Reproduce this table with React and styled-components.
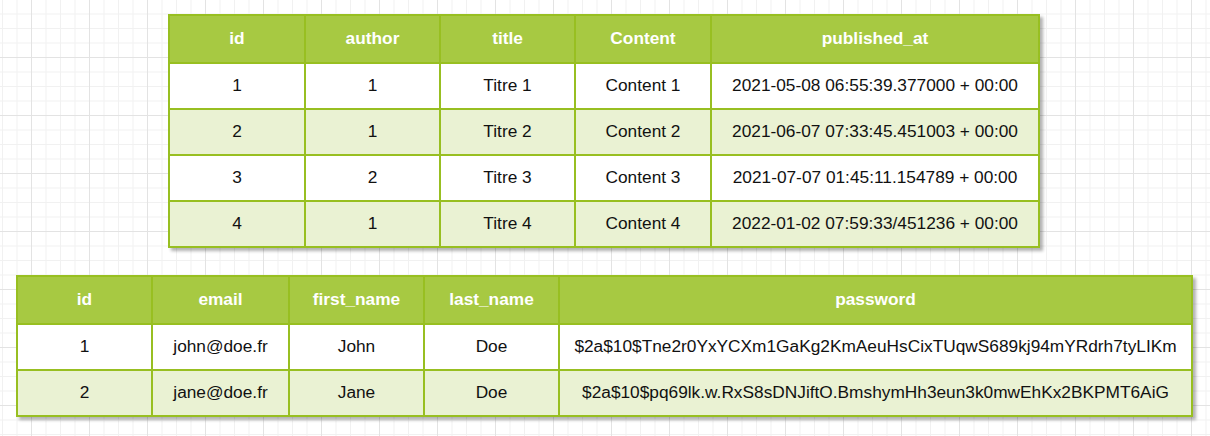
import styled, { createGlobalStyle } from "styled-components";

const GlobalStyle = createGlobalStyle`
html, body {
  margin: 0;
  padding: 0;
  height: 100%;
}
body {
  font-family: "Liberation Sans", Arial, sans-serif;
  background-color: #ffffff;
  background-image:
    linear-gradient(to right, #e3e3e3 1px, transparent 1px),
    linear-gradient(to bottom, #e3e3e3 1px, transparent 1px),
    linear-gradient(to right, #f1f1f1 1px, transparent 1px),
    linear-gradient(to bottom, #f1f1f1 1px, transparent 1px);
  background-size: 58px 58px, 58px 58px, 14.5px 14.5px, 14.5px 14.5px;
  background-position: 31px 0, 0 57px, 2px 0, 0 13.5px;
}
`;

const Canvas = styled.div`
display: flex;
flex-direction: column;
align-items: flex-start;
gap: 27px;
padding: 14px 0 0 0;
min-height: 436px;
box-sizing: border-box;
`;

const Table = styled.table`
border-collapse: collapse;
table-layout: fixed;
width: ${p => p.$width}px;
margin-left: ${p => p.$left}px;
box-shadow: 3px 3px 3px rgba(0, 0, 0, 0.3);
font-size: 17.3px;
`;

const Th = styled.th`
background: #a7c942;
color: #ffffff;
font-weight: bold;
height: 45.8px;
padding: 0;
border: 2px solid #98bf21;
text-align: center;
`;

const Row = styled.tr`
background: ${p => (p.$alt ? "#eaf2d3" : "#ffffff")};
`;

const Td = styled.td`
color: #111;
height: 44px;
padding: 0;
border: 2px solid #98bf21;
text-align: center;
white-space: nowrap;
`;

function DataTable({ columns, widths, rows, left }) {
  const total = widths.reduce((a, b) => a + b, 0);
  return (
    <Table $width={total} $left={left}>
      <colgroup>
        {widths.map((w, i) => <col key={i} style={{ width: w }} />)}
      </colgroup>
      <thead>
        <tr>
          {columns.map(c => <Th key={c}>{c}</Th>)}
        </tr>
      </thead>
      <tbody>
        {rows.map((r, i) => (
          <Row key={i} $alt={i % 2 === 1}>
            {r.map((v, j) => <Td key={j}>{v}</Td>)}
          </Row>
        ))}
      </tbody>
    </Table>
  );
}

const posts = [
  ["1", "1", "Titre 1", "Content 1", "2021-05-08 06:55:39.377000 + 00:00"],
  ["2", "1", "Titre 2", "Content 2", "2021-06-07 07:33:45.451003 + 00:00"],
  ["3", "2", "Titre 3", "Content 3", "2021-07-07 01:45:11.154789 + 00:00"],
  ["4", "1", "Titre 4", "Content 4", "2022-01-02 07:59:33/451236 + 00:00"],
];

const users = [
  ["1", "john@doe.fr", "John", "Doe", "$2a$10$Tne2r0YxYCXm1GaKg2KmAeuHsCixTUqwS689kj94mYRdrh7tyLIKm"],
  ["2", "jane@doe.fr", "Jane", "Doe", "$2a$10$pq69lk.w.RxS8sDNJiftO.BmshymHh3eun3k0mwEhKx2BKPMT6AiG"],
];

export default function App() {
  return (
    <>
      <GlobalStyle />
      <Canvas>
        <DataTable
          left={168}
          columns={["id", "author", "title", "Content", "published_at"]}
          widths={[136, 135, 135, 136, 328]}
          rows={posts}
        />
        <DataTable
          left={16}
          columns={["id", "email", "first_name", "last_name", "password"]}
          widths={[135, 137, 135, 135, 633]}
          rows={users}
        />
      </Canvas>
    </>
  );
}
